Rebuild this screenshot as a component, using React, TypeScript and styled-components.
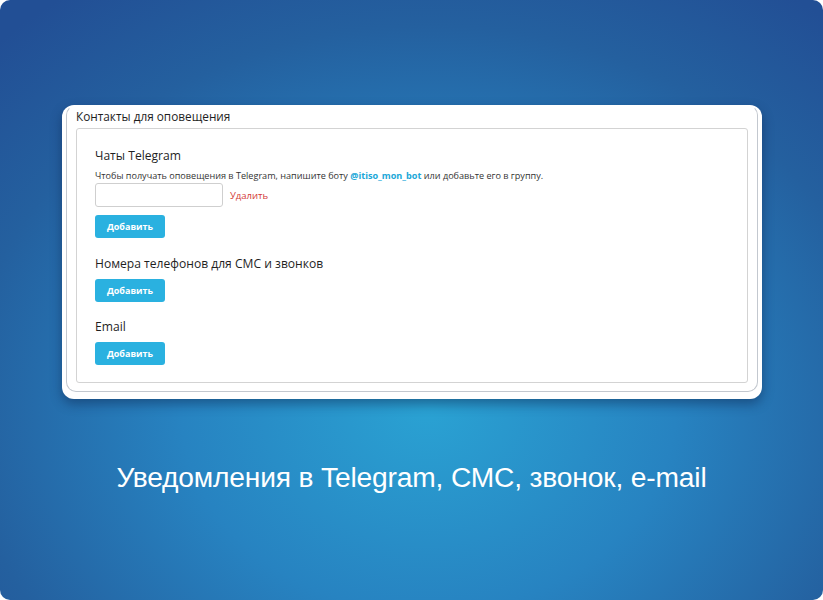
import React from "react";
import styled, { createGlobalStyle } from "styled-components";

const Global = createGlobalStyle`
  html, body { margin: 0; padding: 0; background: #ffffff; }
  #root { width: 823px; height: 600px; }
`;

const Stage = styled.div`
  width: 823px;
  height: 600px;
  box-sizing: border-box;
  border-radius: 10px;
  overflow: hidden;
  background: radial-gradient(ellipse 75% 85% at 52% 68%, #2aa2d3 0%, #2783c1 40%, #24609f 75%, #224f95 100%);
  display: flex;
  flex-direction: column;
  align-items: flex-start;
  padding: 105px 0 0 62px;
`;

const Card = styled.div`
  width: 700px;
  box-sizing: border-box;
  background: #fff;
  border-radius: 12px;
  padding: 0 4px 7px 4px;
  box-shadow: 0 5px 12px rgba(10, 30, 70, 0.45);
`;

const Frame = styled.div`
  border: 1px solid #c3c8cf;
  border-top-color: transparent;
  border-radius: 10px;
  padding: 2px 9px 8px 9px;
`;

const Legend = styled.div`
  font-family: "Open Sans", "Noto Sans", sans-serif;
  font-size: 11.8px;
  color: #1e1e1e;
  line-height: 16px;
  height: 20px;
`;

const Fieldset = styled.div`
  border: 1px solid #d3d3d3;
  border-radius: 3px;
  padding: 18px 18px 17px 18px;
  display: flex;
  flex-direction: column;
`;

const Section = styled.div<{ gap?: number }>`
  display: flex;
  flex-direction: column;
  margin-bottom: ${(p) => p.gap ?? 0}px;
`;

const Heading = styled.div`
  font-family: "Open Sans", "Noto Sans", sans-serif;
  font-size: 12.1px;
  font-weight: 500;
  color: #1f1f1f;
  line-height: 18px;
  margin-bottom: 6px;
`;

const Hint = styled.div`
  font-family: "Open Sans", "Noto Sans", sans-serif;
  font-size: 9.1px;
  color: #333;
  line-height: 14px;
  margin-top: -2px;
`;

const BotLink = styled.a`
  color: #20a7d8;
  font-weight: 700;
  text-decoration: none;
`;

const Row = styled.div`
  display: flex;
  align-items: center;
  gap: 7px;
  margin-bottom: 8px;
`;

const Input = styled.input`
  width: 128px;
  height: 24px;
  box-sizing: border-box;
  border: 1px solid #cfcfcf;
  border-radius: 3px;
  background: #fff;
  outline: none;
`;

const Remove = styled.span`
  font-family: "Open Sans", "Noto Sans", sans-serif;
  font-size: 9.5px;
  color: #d33a36;
`;

const AddButton = styled.button`
  width: 70px;
  height: 23px;
  border: none;
  border-radius: 3px;
  background: #2ab1e0;
  color: #fff;
  font-family: "Open Sans", "Noto Sans", sans-serif;
  font-size: 9px;
  font-weight: 700;
  padding: 0;
  cursor: pointer;
`;

const Caption = styled.div`
  align-self: stretch;
  margin-left: -62px;
  margin-top: 62px;
  text-align: center;
  font-family: "Liberation Sans", Arial, sans-serif;
  font-size: 28.2px;
  color: #ffffff;
  letter-spacing: -0.17px;
`;

export default function App() {
  return (
    <>
      <Global />
      <Stage>
        <Card>
          <Frame>
            <Legend>Контакты для оповещения</Legend>
            <Fieldset>
              <Section gap={17}>
                <Heading>Чаты Telegram</Heading>
                <Hint>
                  Чтобы получать оповещения в Telegram, напишите боту{" "}
                  <BotLink>@itiso_mon_bot</BotLink> или добавьте его в группу.
                </Hint>
                <Row>
                  <Input />
                  <Remove>Удалить</Remove>
                </Row>
                <div>
                  <AddButton>Добавить</AddButton>
                </div>
              </Section>
              <Section gap={16}>
                <Heading>Номера телефонов для СМС и звонков</Heading>
                <div>
                  <AddButton>Добавить</AddButton>
                </div>
              </Section>
              <Section>
                <Heading>Email</Heading>
                <div>
                  <AddButton>Добавить</AddButton>
                </div>
              </Section>
            </Fieldset>
          </Frame>
        </Card>
        <Caption>Уведомления в Telegram, СМС, звонок, e-mail</Caption>
      </Stage>
    </>
  );
}
